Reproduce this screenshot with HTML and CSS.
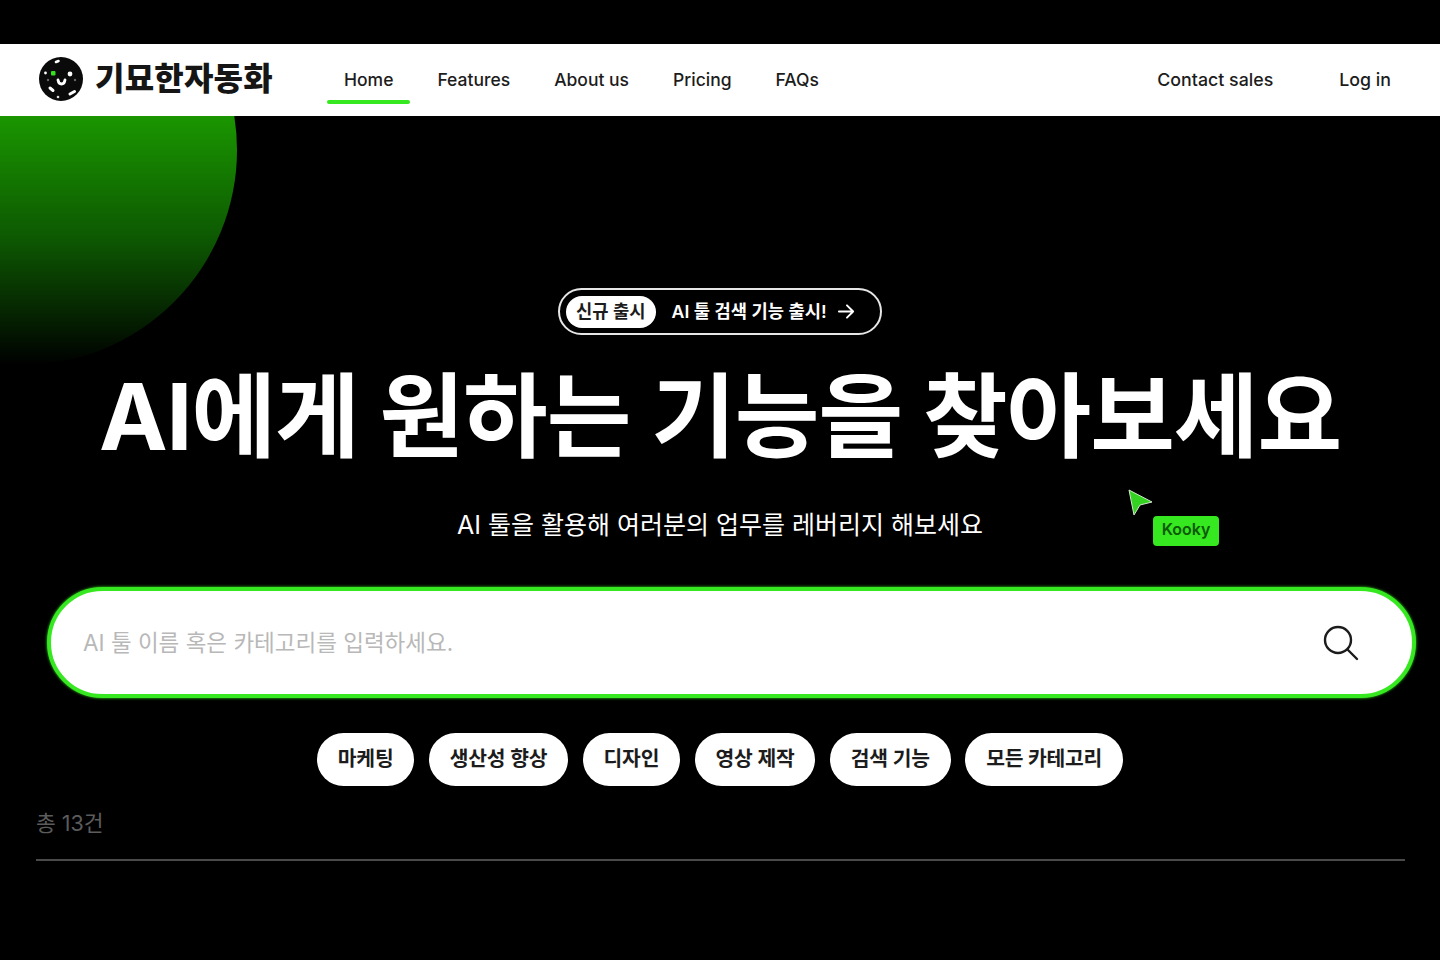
FILE: index.html
```html
<!DOCTYPE html>
<html lang="ko">
<head>
  <meta charset="UTF-8" />
  <meta name="viewport" content="width=device-width, initial-scale=1.0" />
  <title>기묘한자동화</title>
  <link rel="stylesheet" href="styles.css">
</head>
<body>
  <header class="site-header">
    <a class="brand" href="#">
      <svg class="brand-mark" viewBox="0 0 44 44" aria-hidden="true">
        <circle cx="22" cy="22" r="22" fill="#0a0a0a"/>
        <rect x="12" y="14" width="4.500" height="4.500" rx="1" fill="#35e01f"/>
        <circle cx="31" cy="17" r="2.400" fill="#fff"/>
        <path d="M19 23c.5 3 2 4 3.500 4s3-1 3.500-4" fill="none" stroke="#fff" stroke-width="2.800" stroke-linecap="round"/>
        <path d="M17 5l2.500-1" stroke="#fff" stroke-width="2.600" stroke-linecap="round"/>
        <circle cx="6.500" cy="16" r="1.400" fill="#fff"/>
        <path d="M11 31l3 2.500" stroke="#fff" stroke-width="3" stroke-linecap="round"/>
        <circle cx="19" cy="40" r="1.300" fill="#ddd"/>
        <path d="M31 37l4.500-2.500" stroke="#fff" stroke-width="3" stroke-linecap="round"/>
        <circle cx="9" cy="23" r="1.200" fill="#666"/>
        <circle cx="36" cy="23" r="1.200" fill="#666"/>
      </svg>
      <span class="brand-name">기묘한자동화</span>
    </a>
    <nav class="main-nav">
      <a class="active" href="#">Home</a>
      <a href="#">Features</a>
      <a href="#">About us</a>
      <a href="#">Pricing</a>
      <a href="#">FAQs</a>
    </nav>
    <div class="header-links">
      <a href="#">Contact sales</a>
      <a href="#">Log in</a>
    </div>
  </header>

  <main class="hero">
    <div class="hero-glow"></div>

    <a class="announce" href="#">
      <span class="announce-tag">신규 출시</span>
      <span class="announce-text">AI 툴 검색 기능 출시!</span>
      <svg class="announce-arrow" viewBox="0 0 20 20" aria-hidden="true">
        <path d="M2 10h15M10.500 3.500 17 10l-6.500 6.500" fill="none" stroke="#fff" stroke-width="2" stroke-linecap="round" stroke-linejoin="round"/>
      </svg>
    </a>

    <h1>AI에게 원하는 기능을 찾아보세요</h1>
    <p class="subtitle">AI 툴을 활용해 여러분의 업무를 레버리지 해보세요</p>

    <div class="cursor-tag">
      <svg class="cursor-arrow" viewBox="0 0 26 28" aria-hidden="true">
        <path d="M1 1 24 13 12 16 6 26Z" fill="#35d321" stroke="#cfe8cb" stroke-width="1"/>
      </svg>
      <span class="cursor-label">Kooky</span>
    </div>

    <form class="search">
      <span class="search-placeholder">AI 툴 이름 혹은 카테고리를 입력하세요.</span>
      <svg class="search-icon" viewBox="0 0 36 36" aria-hidden="true">
        <circle cx="15" cy="15" r="13" fill="none" stroke="#1c1c1c" stroke-width="2.400"/>
        <path d="M25 25l9 9" stroke="#1c1c1c" stroke-width="2.400" stroke-linecap="round"/>
      </svg>
    </form>

    <div class="chips">
      <a href="#">마케팅</a>
      <a href="#">생산성 향상</a>
      <a href="#">디자인</a>
      <a href="#">영상 제작</a>
      <a href="#">검색 기능</a>
      <a href="#">모든 카테고리</a>
    </div>

    <div class="results-count">총 13건</div>
  </main>
</body>
</html>
```

FILE: styles.css
```css
:root {
  --green: #36e81f;
  --text: #1c1c1c;
}

* {
  box-sizing: border-box;
}

html, body {
  margin: 0;
  height: 100%;
}

body {
  background: #000;
  color: var(--text);
  font-family: Inter, "Noto Sans CJK KR", sans-serif;
  padding-top: 44px;
  overflow: hidden;
}

a {
  color: inherit;
  text-decoration: none;
}

/* header */
.site-header {
  height: 72px;
  background: #fff;
  display: flex;
  align-items: center;
  padding: 0 49px 0 39px;
}

.brand {
  display: flex;
  align-items: center;
  gap: 12px;
  width: 288px;
  margin-bottom: 3px;
}

.brand-mark {
  width: 44px;
  height: 44px;
}

.brand-name {
  font-size: 32px;
  line-height: 1;
  padding-top: 1px;
  font-weight: 900;
  letter-spacing: 0.2px;
  color: #151515;
}

.main-nav {
  display: flex;
  gap: 10px;
  height: 100%;
  font-size: 17.500px;
  font-weight: 500;
}

.main-nav a {
  display: flex;
  align-items: center;
  padding: 0 17px 2px;
  position: relative;
}

.main-nav a.active::after {
  content: "";
  position: absolute;
  left: 0;
  right: 0;
  bottom: 12px;
  height: 4px;
  border-radius: 2px;
  background: var(--green);
}

.header-links {
  margin-left: auto;
  margin-bottom: 2px;
  display: flex;
  gap: 66px;
  font-size: 17.800px;
  font-weight: 500;
}

/* hero */
.hero {
  position: relative;
  height: 844px;
  overflow: hidden;
  display: flex;
  flex-direction: column;
  align-items: center;
  padding-top: 172px;
  color: #fff;
}

.hero-glow {
  position: absolute;
  left: -193px;
  top: -181px;
  width: 430px;
  height: 430px;
  border-radius: 50%;
  background: linear-gradient(180deg, #1a9600 42%, #0d5a02 70%, #000 100%);
}

.announce {
  position: relative;
  display: flex;
  align-items: center;
  width: 324px;
  height: 47px;
  padding: 0 20px 0 6px;
  border: 2px solid #e6e6e6;
  border-radius: 24px;
  white-space: nowrap;
}

.announce-tag {
  flex-shrink: 0;
  background: #fff;
  color: var(--text);
  font-size: 17.700px;
  font-weight: 600;
  height: 32px;
  line-height: 31px;
  padding: 0 10px;
  border-radius: 16px;
}

.announce-text {
  flex-shrink: 0;
  margin-left: 16px;
  margin-bottom: 3px;
  font-size: 17.700px;
  font-weight: 600;
}

.announce-arrow {
  flex-shrink: 0;
  width: 19px;
  height: 19px;
  margin-left: 10px;
}

h1 {
  position: relative;
  margin: 27px 0 0;
  font-size: 92px;
  line-height: 110px;
  font-weight: 700;
  letter-spacing: -1px;
  white-space: nowrap;
}

.subtitle {
  position: relative;
  margin: 36px 0 0;
  font-size: 25px;
  line-height: 34px;
  font-weight: 400;
}

.cursor-tag {
  position: absolute;
  left: 1128px;
  top: 373px;
}

.cursor-arrow {
  display: block;
  width: 26px;
  height: 28px;
}

.cursor-label {
  position: absolute;
  left: 25px;
  top: 27px;
  width: 66px;
  height: 30px;
  line-height: 26px;
  text-align: center;
  background: var(--green);
  color: #0d5a06;
  border-radius: 4px;
  font-size: 16px;
  font-weight: 600;
}

.search {
  width: 1369px;
  height: 111px;
  margin-top: 45px;
  margin-left: 47px;
  align-self: flex-start;
  background: #fff;
  border: 4px solid var(--green);
  border-radius: 56px;
  box-shadow: 0 0 3px var(--green);
  display: flex;
  align-items: center;
  justify-content: space-between;
  padding: 0 53px 0 32px;
}

.search-placeholder {
  font-size: 22.500px;
  color: #b8b8b8;
  margin-bottom: 4px;
}

.search-icon {
  width: 36px;
  height: 36px;
  margin-top: 1px;
}

.chips {
  display: flex;
  gap: 14.400px;
  margin-top: 35px;
}

.chips a {
  height: 53px;
  line-height: 52px;
  padding: 0 21px;
  background: #fff;
  color: var(--text);
  border-radius: 27px;
  font-size: 20.400px;
  font-weight: 600;
  letter-spacing: -0.25px;
}

.results-count {
  align-self: stretch;
  margin: 20px 35px 0 36px;
  padding-bottom: 19px;
  border-bottom: 2px solid #4a4a4a;
  font-size: 21.500px;
  line-height: 34px;
  color: #5c5c5c;
}
```
